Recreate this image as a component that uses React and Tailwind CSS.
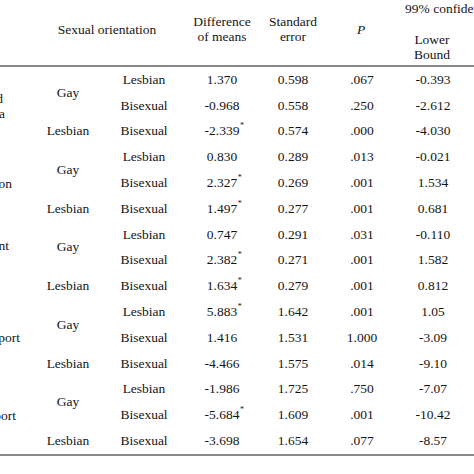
import React from 'react'

// rows of each block: [diff, star, se, p, lower]
const groups = [
  {
    label: [
      ['Perceived', 'mr-[25px]'],
      ['stigma', 'mr-[23px]'],
    ],
    rows: [
      ['1.370', false, '0.598', '.067', '-0.393'],
      ['-0.968', false, '0.558', '.250', '-2.612'],
      ['-2.339', true, '0.574', '.000', '-4.030'],
    ],
  },
  {
    label: [['Depression', 'mr-[16px]']],
    rows: [
      ['0.830', false, '0.289', '.013', '-0.021'],
      ['2.327', true, '0.269', '.001', '1.534'],
      ['1.497', true, '0.277', '.001', '0.681'],
    ],
  },
  {
    label: [
      ['Self-concealment', 'mr-[19px]'],
      ['score', 'mr-[60px]'],
      ['(SC)', 'mr-[60px]'],
    ],
    rows: [
      ['0.747', false, '0.291', '.031', '-0.110'],
      ['2.382', true, '0.271', '.001', '1.582'],
      ['1.634', true, '0.279', '.001', '0.812'],
    ],
  },
  {
    label: [['Family support', 'mr-[8px]']],
    rows: [
      ['5.883', true, '1.642', '.001', '1.05'],
      ['1.416', false, '1.531', '1.000', '-3.09'],
      ['-4.466', false, '1.575', '.014', '-9.10'],
    ],
  },
  {
    label: [['Friend support', 'mr-[12px]']],
    rows: [
      ['-1.986', false, '1.725', '.750', '-7.07'],
      ['-5.684', true, '1.609', '.001', '-10.42'],
      ['-3.698', false, '1.654', '.077', '-8.57'],
    ],
  },
]

const seconds = ['Lesbian', 'Bisexual', 'Bisexual']

function Cell({ w, children }) {
  return <div className={`${w} flex items-center justify-center`}>{children}</div>
}

function Diff({ value, star }) {
  return (
    <span className="relative">
      {value}
      {star && <span className="absolute left-full top-[-1px] pl-[0.5px] text-[8px]">*</span>}
    </span>
  )
}

function Group({ g }) {
  return (
    <div className="flex h-[77.4px]">
      <div className="w-[28px] flex flex-col items-end justify-center leading-[15px] whitespace-nowrap">
        {g.label.map(([text, mr]) => (
          <div key={text} className={mr}>{text}</div>
        ))}
      </div>
      <div className="w-[80px] flex flex-col">
        <div className="h-[51.6px] flex items-center justify-center">Gay</div>
        <div className="h-[25.8px] flex items-center justify-center">Lesbian</div>
      </div>
      <div className="flex flex-col">
        {g.rows.map((r, i) => (
          <div key={i} className="h-[25.8px] flex">
            <Cell w="w-[72px]">{seconds[i]}</Cell>
            <Cell w="w-[84px]"><Diff value={r[0]} star={r[1]} /></Cell>
            <Cell w="w-[58px]">{r[2]}</Cell>
            <Cell w="w-[80px]">{r[3]}</Cell>
            <Cell w="w-[62px]">{r[4]}</Cell>
            <div className="w-[78px]" />
          </div>
        ))}
      </div>
    </div>
  )
}

export default function App() {
  return (
    <div className="w-[474px] h-[474px] overflow-hidden bg-white text-[#151515] text-[13.5px] font-['Liberation_Serif','Times_New_Roman',serif]">
      <div className="w-[620px]">
        <div className="flex h-[65px] leading-[15px]">
          <div className="w-[28px]" />
          <div className="w-[152px] h-[58px] flex items-center justify-center pl-[6px]">Sexual orientation</div>
          <div className="w-[84px] h-[57px] flex flex-col items-center justify-center text-center">
            <div>Difference</div>
            <div>of means</div>
          </div>
          <div className="w-[58px] h-[57px] flex flex-col items-center justify-center text-center">
            <div>Standard</div>
            <div>error</div>
          </div>
          <div className="w-[78px] h-[58px] flex items-center justify-center italic">P</div>
          <div className="w-[142px] flex flex-col">
            <div className="pt-[0.5px] text-center whitespace-nowrap">99% confidence interval</div>
            <div className="flex mt-[16px]">
              <div className="w-[64px] text-center">
                <div>Lower</div>
                <div>Bound</div>
              </div>
              <div className="w-[78px] text-center">
                <div>Upper</div>
                <div>Bound</div>
              </div>
            </div>
          </div>
        </div>
        <div className="h-[2px] bg-[#8a8a8a]" />
        {groups.map((g, i) => (
          <Group key={i} g={g} />
        ))}
        <div className="h-[2px] bg-[#8a8a8a]" />
      </div>
    </div>
  )
}
